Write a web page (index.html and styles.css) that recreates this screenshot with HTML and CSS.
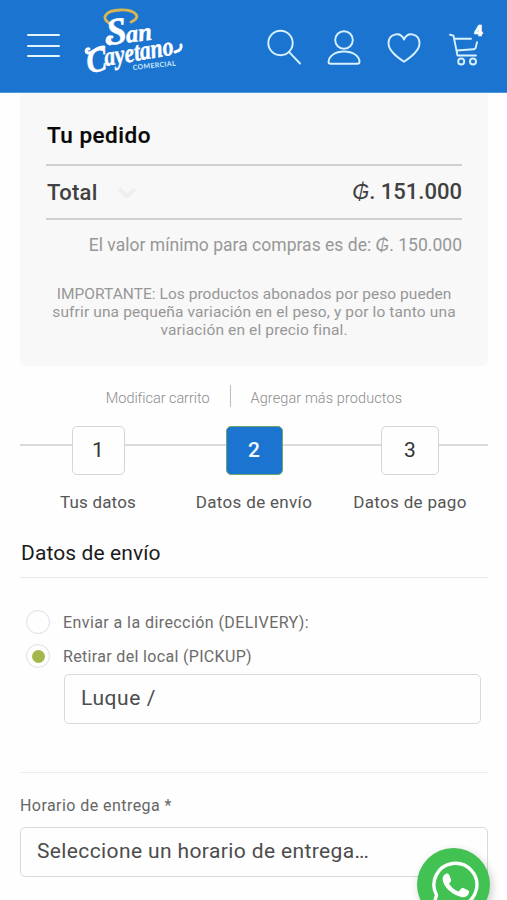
FILE: index.html
```html
<!DOCTYPE html>
<html lang="es">
<head>
<meta charset="utf-8">
<meta name="viewport" content="width=device-width">
<title>San Cayetano Comercial</title>
<link rel="stylesheet" href="styles.css">
</head>
<body>
<header class="topbar">
  <button class="menu" aria-label="Menú"><span></span><span></span><span></span></button>
  <a class="logo">
    <svg width="108" height="80" viewBox="0 0 108 80">
      <path class="halo" d="M28 18C20 13 24 5.500 39 5s23 7 11 12"/>
      <g transform="translate(27 40) rotate(-7)">
        <text class="script" x="0" y="0" font-size="38" textLength="20" lengthAdjust="spacingAndGlyphs">S</text>
        <text class="script" x="19" y="0" font-size="25" textLength="26" lengthAdjust="spacingAndGlyphs">an</text>
      </g>
      <path class="swash" d="M29 39C24 37 26 31 31 32"/>
      <g transform="translate(7 66) rotate(-9.500)">
        <text class="script" x="0" y="2" font-size="34" textLength="20" lengthAdjust="spacingAndGlyphs">C</text>
        <text class="script" x="18" y="-2" font-size="27" textLength="70" lengthAdjust="spacingAndGlyphs">ayetano</text>
      </g>
      <path class="swash" d="M23 42C14 42 12 49 7 48C4 47 5 43 8 44M94 47C99 46 101 43 100 40"/>
      <text class="sub" transform="translate(52 65) rotate(-6)" x="0" y="0" font-size="7" textLength="43">COMERCIAL</text>
    </svg>
  </a>
  <nav class="actions">
    <svg width="36" height="38" viewBox="0 0 36 38"><circle cx="14.500" cy="14" r="12.200"/><path d="M23.200 23.200L34 34.500"/></svg>
    <svg width="36" height="38" viewBox="0 0 36 38"><circle cx="18" cy="11" r="8.800"/><path d="M4.500 34.800q-2 0-2-2C3 27 9 22.500 18 22.500s15.500 4.500 15.500 10.300q0 2-2 2z"/></svg>
    <svg width="36" height="38" viewBox="0 0 36 38"><path d="M18 32.800C12 28.500 2.500 22 2.500 14.200c0-9 11.500-12.500 15.500-3.700 4-8.800 15.500-5.300 15.500 3.700 0 7.800-9.500 14.300-15.500 18.600z"/></svg>
    <div class="cart">
      <svg width="36" height="38" viewBox="0 0 36 38"><path d="M4 5.800l3.500.8L11.500 26.500H30M8.500 9.800H25M11 21.500l16.500-1.300q2 0 2.300-2l1.200-5"/><circle cx="15.200" cy="32.500" r="3"/><circle cx="27" cy="32.500" r="3"/></svg>
      <span class="badge">4</span>
    </div>
  </nav>
</header>
<main class="page">
  <section class="order">
    <h1>Tu pedido</h1>
    <div class="total">
      <span class="total-label">Total</span>
      <svg class="chevron" width="20" height="14" viewBox="0 0 20 14"><path d="M2 3l8 7 8-7"/></svg>
      <span class="amount"><span class="currency">₲</span>. 151.000</span>
    </div>
    <p class="minimum">El valor mínimo para compras es de: <span class="currency">₲</span>. 150.000</p>
    <p class="notice">IMPORTANTE: Los productos abonados por peso pueden<br><span class="wide">sufrir una pequeña variación en el peso, y por lo tanto una</span><br><span class="wide">variación en el precio final.</span></p>
  </section>
  <div class="links"><a>Modificar carrito</a><i></i><a class="more">Agregar más productos</a></div>
  <ol class="steps">
    <li><b class="one">1</b><span class="first">Tus datos</span></li>
    <li><b class="current">2</b><span>Datos de envío</span></li>
    <li><b>3</b><span>Datos de pago</span></li>
  </ol>
  <h2>Datos de envío</h2>
  <div class="options">
    <label class="option delivery"><i></i>Enviar a la dirección (DELIVERY):</label>
    <label class="option"><i class="on"></i>Retirar del local (PICKUP)</label>
    <div class="field store">Luque /</div>
  </div>
  <section class="schedule">
    <label>Horario de entrega *</label>
    <div class="field time">Seleccione un horario de entrega<span class="dots">...</span></div>
  </section>
</main>
<a class="whatsapp" aria-label="WhatsApp">
  <svg width="50" height="50" viewBox="0 0 50 50"><path class="bubble" d="M4 47l3.500-12A21.500 21.500 0 1 1 15 43z"/><path class="phone" d="M16.500 14c2-1 3-.5 4 1.500l1.500 4c.5 1.500-.5 2.500-2 4 2.500 4 5.500 6.500 9.500 8l2.800-3c1-1 1.500-.7 2.500-.2l4 2c1.500.7 1.500 1 1.200 2.500-.8 3.500-4.500 5-7.700 4.200C24 35 16.500 29 14 21.500 13 18 14 15.500 16.500 14z"/></svg>
</a>
</body>
</html>
```
FILE: styles.css
```css
* { box-sizing: border-box; }
body { margin: 0; height: 900px; overflow: hidden; position: relative; background: #fefefe; font-family: Roboto, sans-serif; color: #4b4b4b; }
h1, h2, p, ol { margin: 0; padding: 0; }

.topbar { height: 93px; background: #1b74d0; border-bottom: 1px solid #4f94dc; display: flex; align-items: flex-start; padding-left: 27px; }
.menu { width: 33px; margin-top: 34px; padding: 0; border: 0; background: none; display: flex; flex-direction: column; gap: 8.500px; }
.menu span { height: 2px; background: #e2f5ff; border-radius: 1px; }
.logo { margin: 5px 0 0 21px; height: 80px; width: 104px; }
.logo svg { display: block; overflow: visible; }
.halo { fill: none; stroke: #d9b653; stroke-width: 2.8; stroke-linecap: round; }
.script { font-family: "Liberation Serif", serif; font-style: italic; font-weight: 700; fill: #fff; stroke: #fff; stroke-width: .5; }
.swash { fill: none; stroke: #fff; stroke-width: 3; stroke-linecap: round; }
.sub { font-family: Lato, sans-serif; font-weight: 700; fill: #c9e9fb; }
.actions { display: flex; gap: 24px; margin: 29px 0 0 81px; }
.actions svg { display: block; fill: none; stroke: #d8f1ff; stroke-width: 1.9; stroke-linecap: round; stroke-linejoin: round; }
.cart { position: relative; }
.badge { position: absolute; left: 28px; top: -7px; font: 900 15px/18px Roboto, sans-serif; color: #fff; -webkit-text-stroke: .7px #fff; }

.page { padding: 0 19px 0 20px; }
.order { background: #f8f8f8; padding: 28px 26px 27px; border-radius: 0 0 5px 5px; }
h1 { font-size: 22.5px; line-height: 28px; font-weight: 500; letter-spacing: .5px; color: #080808; padding: 0 0 15px 1px; -webkit-text-stroke: .2px; }
.total { display: flex; align-items: center; height: 56px; border-top: 2px solid #d0d0d0; border-bottom: 2px solid #d0d0d0; font-size: 22px; font-weight: 500; color: #414141; }
.total-label { letter-spacing: .3px; padding-left: 1px; }
.chevron { margin: 2px 0 0 19px; fill: none; stroke: #eee; stroke-width: 4; }
.amount { margin-left: auto; letter-spacing: 0; }
.currency { font-style: italic; font-weight: 400; }
.minimum { padding-top: 15px; text-align: right; font-size: 17.5px; line-height: 20px; letter-spacing: .02px; color: #979797; white-space: nowrap; }
.notice { margin-top: 30px; text-align: center; font-size: 15.5px; line-height: 18px; letter-spacing: .04px; color: #979797; white-space: nowrap; }
.wide { letter-spacing: .13px; }

.links { display: flex; justify-content: center; align-items: center; gap: 20px; height: 22px; margin-top: 19px; font-size: 14.5px; font-weight: 300; letter-spacing: -.06px; color: #8c8c8c; padding-top: 4px; }
.links i { width: 1px; height: 22px; margin-top: -4px; background: #bcbcbc; }
.more { letter-spacing: .1px; }

.steps { list-style: none; display: grid; grid-template-columns: repeat(3, 1fr); margin-top: 19px; background: linear-gradient(#dadada, #dadada) 0 18px / 100% 2px no-repeat; }
.steps li { display: flex; flex-direction: column; align-items: center; gap: 17px; padding-bottom: 1px; }
.steps b { width: 58px; height: 49px; border: 1.5px solid #d6d6d6; border-radius: 5px; background: #fefefe; font-size: 21px; line-height: 47px; font-weight: 400; text-align: center; color: #333; }
.steps .one { width: 53px; }
.steps .current { background: #1b74d0; border-color: #6fa868; color: #f2faff; width: 57px; font-weight: 500; }
.steps span { font-size: 17px; line-height: 20px; letter-spacing: .32px; color: #555; }
.steps .first { letter-spacing: .17px; }

h2 { margin-top: 27px; padding: 0 0 11px 1px; border-bottom: 1px solid #e8e8e8; font-size: 21px; line-height: 26px; font-weight: 400; letter-spacing: .1px; color: #1b1b1b; }
.options { padding: 27px 7px 48px 6px; border-bottom: 1px solid #eee; }
.option { display: flex; align-items: center; gap: 13px; height: 34px; font-size: 16px; letter-spacing: .33px; color: #6b6b6b; }
.delivery { letter-spacing: .42px; }
.option i { width: 24px; height: 24px; border: 1.5px solid #dedede; border-radius: 50%; display: grid; place-items: center; }
.on::after { content: ""; width: 13px; height: 13px; border-radius: 50%; background: #a3b74d; }
.field { height: 50px; border: 1.5px solid #dadada; border-radius: 5px; padding: 0 16px; font-size: 21px; line-height: 47px; color: #4c4c4c; }
.store { margin: 1px 0 0 38px; letter-spacing: .57px; }
.schedule { padding-top: 23px; }
.schedule label { display: block; font-size: 16px; line-height: 20px; letter-spacing: .44px; color: #666; margin-bottom: 11px; }
.time { letter-spacing: .38px; }
.dots { letter-spacing: -1px; }

.whatsapp { position: absolute; left: 417px; top: 848px; width: 73px; height: 73px; border-radius: 50%; background: #43c254; box-shadow: 2px 3px 9px rgba(0, 0, 0, .2); padding: 12px 0 0 12px; }
.bubble { fill: none; stroke: #fff; stroke-width: 3.4; stroke-linejoin: round; }
.phone { fill: #fff; }
```
